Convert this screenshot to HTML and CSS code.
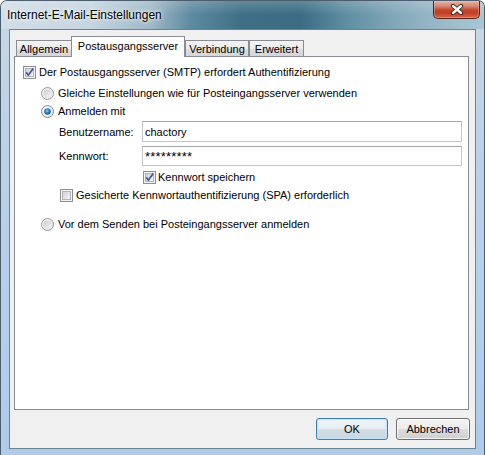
FILE: index.html
```html
<!DOCTYPE html>
<html lang="de">
<head>
<meta charset="utf-8">
<title>Internet-E-Mail-Einstellungen</title>
<link rel="stylesheet" href="styles.css">
</head>
<body>
<svg class="defs" width="0" height="0" aria-hidden="true">
  <defs>
    <linearGradient id="cbIn" x1="0" y1="0" x2="1" y2="1">
      <stop offset="0" stop-color="#cbcfd5"/>
      <stop offset="1" stop-color="#f7f7f7"/>
    </linearGradient>
    <linearGradient id="rbOut" x1="0" y1="0" x2="1" y2="1">
      <stop offset="0" stop-color="#f6f6f6"/>
      <stop offset="1" stop-color="#e2e2e2"/>
    </linearGradient>
    <linearGradient id="rbIn" x1="0" y1="0" x2="1" y2="1">
      <stop offset="0" stop-color="#c9ccd0"/>
      <stop offset="1" stop-color="#f4f4f4"/>
    </linearGradient>
    <radialGradient id="rbDot" cx="0.45" cy="0.4" r="0.6">
      <stop offset="0" stop-color="#8fd3f6"/>
      <stop offset="0.5" stop-color="#2f86c2"/>
      <stop offset="1" stop-color="#174a7c"/>
    </radialGradient>
  </defs>
</svg>
<div class="window">
  <div class="titlebar">
    <span class="title">Internet-E-Mail-Einstellungen</span>
    <div class="close">
      <svg width="14" height="11" viewBox="0 0 14 11">
        <path d="M3 2 L11 9 M11 2 L3 9" stroke="#3b1a14" stroke-width="4.2" stroke-linecap="round"/>
        <path d="M3 2 L11 9 M11 2 L3 9" stroke="#ffffff" stroke-width="2.4" stroke-linecap="round"/>
      </svg>
    </div>
  </div>
  <div class="client">
    <div class="tabs">
      <div class="tab">Allgemein</div>
      <div class="tab active">Postausgangsserver</div>
      <div class="tab tab-v">Verbindung</div>
      <div class="tab tab-e">Erweitert</div>
    </div>
    <div class="panel">
      <div class="row row-auth">
        <svg class="box" width="13" height="13" viewBox="0 0 13 13">
          <rect x="0.5" y="0.5" width="12" height="12" fill="#f4f4f4" stroke="#8f8f8f"/>
          <rect x="2.5" y="2.5" width="8" height="8" fill="url(#cbIn)" stroke="#b0b4ba"/>
          <path d="M3.2 6.4 L5.4 9.2 L10.2 2.6" stroke="#41589a" stroke-width="1.7" fill="none"/>
        </svg>
        <span>Der Postausgangsserver (SMTP) erfordert Authentifizierung</span>
      </div>
      <div class="row row-radio row-same">
        <svg class="rad" width="13" height="13" viewBox="0 0 13 13">
          <circle cx="6.5" cy="6.5" r="6" fill="url(#rbOut)" stroke="#9a9a9a"/>
          <circle cx="6.5" cy="6.5" r="4" fill="url(#rbIn)"/>
        </svg>
        <span>Gleiche Einstellungen wie für Posteingangsserver verwenden</span>
      </div>
      <div class="row row-radio">
        <svg class="rad" width="13" height="13" viewBox="0 0 13 13">
          <circle cx="6.5" cy="6.5" r="6" fill="url(#rbOut)" stroke="#8a8a8a"/>
          <circle cx="6.5" cy="6.5" r="4" fill="#ffffff"/>
          <circle cx="6.5" cy="6.5" r="3.3" fill="url(#rbDot)"/>
        </svg>
        <span>Anmelden mit</span>
      </div>
      <div class="field field-user">
        <span class="label">Benutzername:</span>
        <div class="input">chactory</div>
      </div>
      <div class="field field-pass">
        <span class="label">Kennwort:</span>
        <div class="input">*********</div>
      </div>
      <div class="row row-save">
        <svg class="box" width="13" height="13" viewBox="0 0 13 13">
          <rect x="0.5" y="0.5" width="12" height="12" fill="#f4f4f4" stroke="#8f8f8f"/>
          <rect x="2.5" y="2.5" width="8" height="8" fill="url(#cbIn)" stroke="#b0b4ba"/>
          <path d="M3.2 6.4 L5.4 9.2 L10.2 2.6" stroke="#41589a" stroke-width="1.7" fill="none"/>
        </svg>
        <span>Kennwort speichern</span>
      </div>
      <div class="row row-spa">
        <svg class="box" width="13" height="13" viewBox="0 0 13 13">
          <rect x="0.5" y="0.5" width="12" height="12" fill="#f4f4f4" stroke="#8f8f8f"/>
          <rect x="2.5" y="2.5" width="8" height="8" fill="url(#cbIn)" stroke="#b0b4ba"/>
        </svg>
        <span>Gesicherte Kennwortauthentifizierung (SPA) erforderlich</span>
      </div>
      <div class="row row-radio row-before">
        <svg class="rad" width="13" height="13" viewBox="0 0 13 13">
          <circle cx="6.5" cy="6.5" r="6" fill="url(#rbOut)" stroke="#9a9a9a"/>
          <circle cx="6.5" cy="6.5" r="4" fill="url(#rbIn)"/>
        </svg>
        <span>Vor dem Senden bei Posteingangsserver anmelden</span>
      </div>
    </div>
    <div class="buttons">
      <button class="btn btn-default">OK</button>
      <button class="btn btn-cancel">Abbrechen</button>
    </div>
  </div>
</div>
</body>
</html>
```

FILE: styles.css
```css
html, body {
  margin: 0;
  padding: 0;
  width: 485px;
  height: 455px;
  overflow: hidden;
  background: #ffffff;
}

body {
  font-family: "Liberation Sans", Arial, sans-serif;
  font-size: 11px;
  color: #000000;
}

.defs {
  position: absolute;
  width: 0;
  height: 0;
}

.window {
  width: 485px;
  height: 455px;
  box-sizing: border-box;
  padding: 0 8px 6px 8px;
  display: flex;
  flex-direction: column;
  border-radius: 7px 7px 0 0;
  border: 1px solid #4d5d6b;
  border-bottom: none;
  background: linear-gradient(180deg, #c9d8e3 0px, #bcd3e8 120px, #b3cfec 300px, #aecbea 100%);
}

.titlebar {
  height: 28px;
  margin: 0 -8px;
  padding: 0 6px;
  display: flex;
  align-items: flex-start;
  justify-content: space-between;
  border-radius: 6px 6px 0 0;
  background:
    linear-gradient(180deg, rgba(255,255,255,0.18) 0, rgba(255,255,255,0) 14px),
    linear-gradient(90deg, #d2dfe8 0px, #c4d5e0 90px, #9fb9c7 150px, #5d8aa0 190px, #3f6f86 240px, #3b6c83 300px, #5f8ea3 345px, #86aabb 400px, #9ebdcb 450px, #a9c6d3 485px);
}

.title {
  margin-top: 7px;
  font-size: 12px;
  color: #000000;
  text-shadow: 0 0 6px #ffffff, 0 0 3px #ffffff;
}

.close {
  width: 47px;
  height: 18px;
  margin-right: -2px;
  box-sizing: border-box;
  display: flex;
  align-items: center;
  justify-content: center;
  border: 1px solid #5a2418;
  border-top: none;
  border-radius: 0 0 5px 5px;
  background: linear-gradient(180deg, #e3b3a6 0px, #d48a73 5px, #c4462d 9px, #c03e26 12px, #d8664a 17px);
  box-shadow: inset 0 0 0 1px rgba(255,210,190,0.35);
}

.client {
  flex: 1;
  box-sizing: border-box;
  display: flex;
  flex-direction: column;
  background: #f0f0f0;
  border: 1px solid #6e8291;
  padding: 6px 5px 8px 4px;
}

.tabs {
  height: 20px;
  display: flex;
  align-items: flex-end;
  padding-left: 2px;
}

.tab {
  box-sizing: border-box;
  height: 16px;
  width: 56px;
  margin-bottom: 0;
  border: 1px solid #898c95;
  border-bottom: none;
  background: linear-gradient(180deg, #f3f3f3 0, #ebebeb 50%, #dedede 51%, #d6d6d6 100%);
  display: flex;
  align-items: center;
  justify-content: center;
  padding-top: 1px;
}

.tab.active {
  position: relative;
  z-index: 1;
  width: 114px;
  height: 21px;
  margin-bottom: -1px;
  margin-left: -1px;
  background: #ffffff;
  padding-top: 0;
  padding-bottom: 3px;
}

.tab.tab-v {
  width: 64px;
}

.tab.tab-e {
  width: 55px;
}

.panel {
  height: 354px;
  box-sizing: border-box;
  background: #ffffff;
  border: 1px solid #898c95;
  margin-right: 1px;
  padding: 6px 0 0 0;
  display: flex;
  flex-direction: column;
}

.row {
  display: flex;
  align-items: center;
  height: 18px;
}

.row svg {
  flex: none;
  display: block;
}

.row-auth {
  padding-left: 8px;
  gap: 3px;
}

.row-radio {
  padding-left: 26px;
  gap: 4px;
}

.row-same {
  margin-top: 3px;
}

.field {
  display: flex;
  align-items: center;
  padding-left: 44px;
  height: 21px;
}

.field-user {
  margin-top: 1px;
}

.field-pass {
  margin-top: 3px;
}

.label {
  width: 83px;
  flex: none;
}

.input {
  width: 320px;
  height: 21px;
  box-sizing: border-box;
  border: 1px solid #c3c6cc;
  border-top-color: #a3a6ad;
  background: #ffffff;
  padding: 0 2px;
  display: flex;
  align-items: center;
  font-size: 11px;
}

.field-pass .input {
  height: 20px;
  font-size: 13px;
  letter-spacing: 0.2px;
  padding-top: 2px;
  color: #000000;
}

.row-save {
  margin-top: 3px;
  height: 16px;
  padding-left: 128px;
  gap: 2px;
}

.row-spa {
  margin-top: 2px;
  height: 16px;
  padding-left: 45px;
  gap: 3px;
}

.row-before {
  margin-top: 13px;
  height: 16px;
}

.buttons {
  margin-top: 8px;
  display: flex;
  justify-content: flex-end;
  gap: 8px;
}

.btn {
  height: 22px;
  box-sizing: border-box;
  font-family: "Liberation Sans", Arial, sans-serif;
  font-size: 11px;
  color: #000000;
  border: 1px solid #707070;
  border-radius: 3px;
  padding: 0;
  background: linear-gradient(180deg, #f2f2f2 0, #ebebeb 50%, #dddddd 51%, #cfcfcf 100%);
  box-shadow: inset 0 0 0 1px rgba(255,255,255,0.7);
}

.btn-default {
  width: 72px;
  border-color: #3c7fb1;
  box-shadow: inset 0 0 0 1px #bfe6fb;
  background: linear-gradient(180deg, #f0f4f7 0, #e6edf2 50%, #d5dee6 51%, #cad6e0 100%);
}

.btn-cancel {
  width: 74px;
}
```
